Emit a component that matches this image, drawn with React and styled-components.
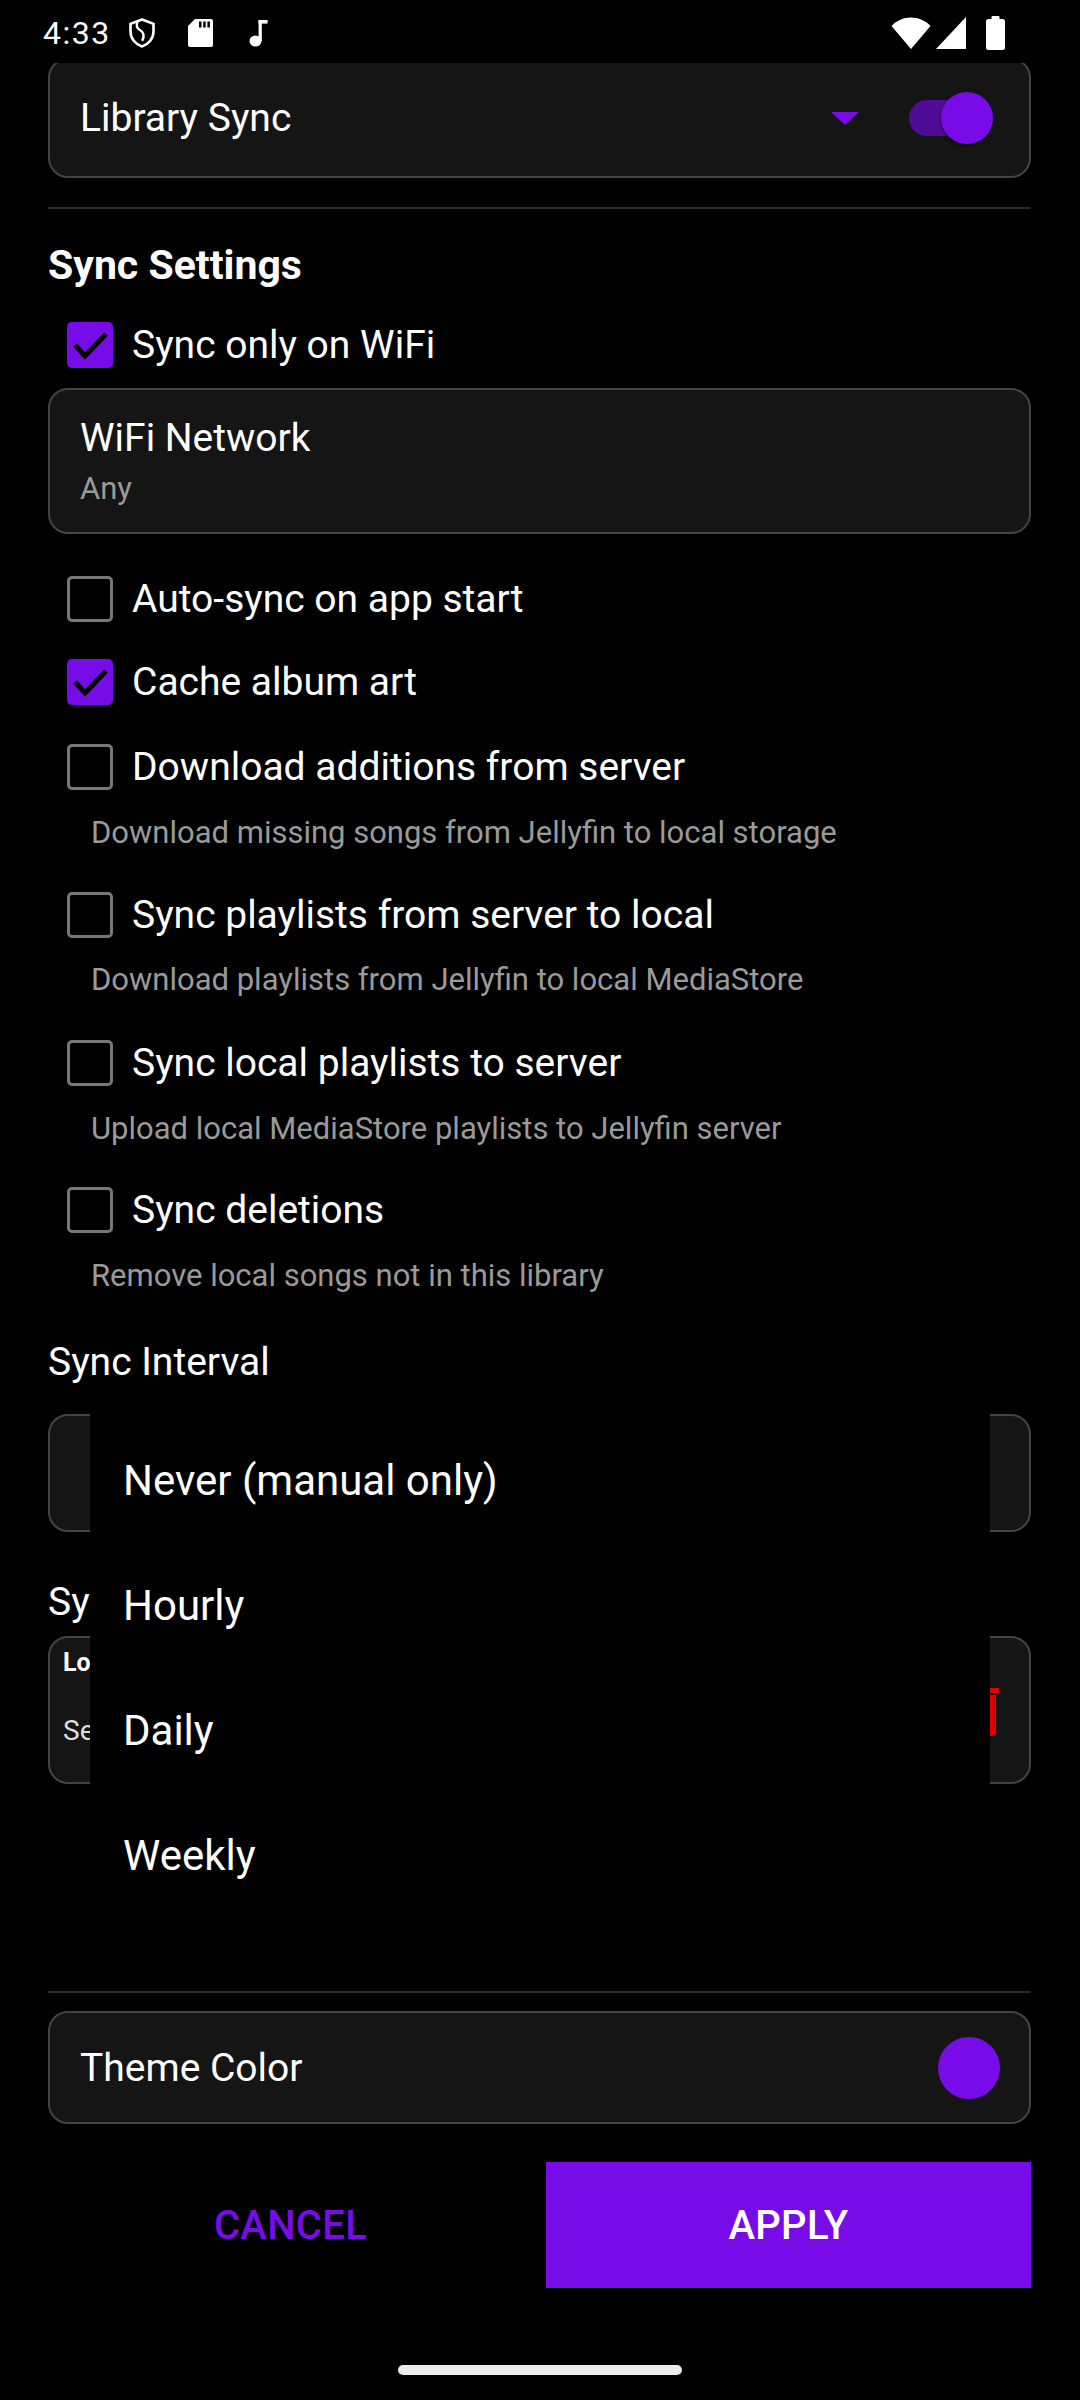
import styled, { createGlobalStyle } from "styled-components";

const PURPLE = "#780ce8";

const GlobalStyle = createGlobalStyle`
  html, body {
    margin: 0;
    padding: 0;
    background: #000;
  }
  * {
    box-sizing: border-box;
  }
`;

const Screen = styled.div`
  width: 1080px;
  height: 2400px;
  background: #000;
  display: flex;
  flex-direction: column;
  overflow: hidden;
  font-family: Roboto, "Noto Sans", sans-serif;
  color: #fff;
`;

const StatusBar = styled.div`
  height: 63px;
  flex-shrink: 0;
  display: flex;
  align-items: center;
  justify-content: space-between;
  padding: 2px 75px 0 43px;
  background: #000;
  position: relative;
  z-index: 5;
`;

const StatusGroup = styled.div`
  display: flex;
  align-items: center;
`;

const StatusIcon = styled.span`
  display: flex;
  margin-left: ${(p) => p.ml || 0}px;
  margin-top: ${(p) => p.mt || 0}px;
`;

const Clock = styled.span`
  font-size: 32px;
  letter-spacing: 1.5px;
  line-height: 1;
`;

const Scroll = styled.div`
  flex: 1;
  overflow: hidden;
  padding: 0 49px 0 48px;
`;

const Card = styled.div`
  background: #151515;
  border: 2px solid #444;
  border-radius: 20px;
  display: flex;
  align-items: ${(p) => (p.top ? "flex-start" : "center")};
  padding: ${(p) => (p.top ? "8px 30px 0 13px" : "0 30px")};
  height: ${(p) => p.h}px;
  margin-top: ${(p) => p.mt || 0}px;
`;

const CardText = styled.div`
  flex: 1;
  display: flex;
  flex-direction: column;
  gap: ${(p) => p.gap || 0}px;
`;

const Label = styled.span`
  font-size: 39px;
  line-height: 48px;
  color: #fff;
`;

const SubLabel = styled.span`
  font-size: 31px;
  line-height: 40px;
  color: #9a9a9a;
`;

const SmallBold = styled.span`
  font-size: 25px;
  font-weight: 700;
  line-height: 34px;
`;

const SmallText = styled.span`
  font-size: 28px;
  line-height: 36px;
  color: #ddd;
`;

const Divider = styled.div`
  height: 2px;
  background: #2a2a2a;
  margin-top: ${(p) => p.mt}px;
`;

const SectionTitle = styled.div`
  font-size: 41px;
  font-weight: 700;
  line-height: 48px;
  margin-top: ${(p) => p.mt}px;
`;

const FieldTitle = styled.div`
  font-size: 39px;
  line-height: 48px;
  margin-top: ${(p) => p.mt}px;
`;

const CheckRow = styled.div`
  height: 72px;
  display: flex;
  align-items: center;
  gap: 19px;
  padding-left: 19px;
  margin-top: ${(p) => p.mt || 0}px;
`;

const Box = styled.div`
  width: 46px;
  height: 46px;
  border-radius: 5px;
  flex-shrink: 0;
  display: flex;
  align-items: center;
  justify-content: center;
  background: ${(p) => (p.checked ? PURPLE : "transparent")};
  border: ${(p) => (p.checked ? "none" : "3px solid #777")};
`;

const Description = styled.div`
  font-size: 31px;
  line-height: 40px;
  color: #9a9a9a;
  padding-left: 43px;
  margin-top: ${(p) => p.mt}px;
`;

const Arrow = styled.div`
  width: 0;
  height: 0;
  border-left: 14px solid transparent;
  border-right: 14px solid transparent;
  border-top: 13px solid ${PURPLE};
  margin-right: ${(p) => p.mr || 0}px;
`;

const SwitchTrack = styled.div`
  position: relative;
  width: 78px;
  height: 36px;
  border-radius: 18px;
  background: #4e0b96;
  margin-right: 12px;
`;

const SwitchThumb = styled.div`
  position: absolute;
  right: -6px;
  top: -8px;
  width: 52px;
  height: 52px;
  border-radius: 50%;
  background: ${PURPLE};
  box-shadow: 0 2px 3px rgba(0, 0, 0, 0.6);
`;

const Swatch = styled.div`
  width: 62px;
  height: 62px;
  border-radius: 50%;
  background: ${PURPLE};
  margin-right: -1px;
`;

const DropdownAnchor = styled.div`
  position: relative;
  margin-top: ${(p) => p.mt}px;
`;

const Menu = styled.div`
  position: absolute;
  top: 0;
  left: 42px;
  right: 41px;
  background: #000;
  padding: 4px 0;
  z-index: 10;
`;

const MenuItem = styled.div`
  height: 125px;
  display: flex;
  align-items: center;
  padding-left: 33px;
  font-size: 42px;
  color: #fff;
`;

const Buttons = styled.div`
  display: flex;
  gap: 13px;
  margin-top: 38px;
`;

const Button = styled.div`
  flex: 1;
  height: 126px;
  display: flex;
  align-items: center;
  justify-content: center;
  font-size: 40px;
  font-weight: 500;
  letter-spacing: 0.3px;
  color: ${(p) => (p.primary ? "#fff" : PURPLE)};
  background: ${(p) => (p.primary ? PURPLE : "transparent")};
`;

const NavBar = styled.div`
  height: 61px;
  flex-shrink: 0;
  display: flex;
  align-items: center;
  justify-content: center;
`;

const Handle = styled.div`
  width: 284px;
  height: 10px;
  border-radius: 5px;
  background: #ececec;
`;

const Check = ({ checked }) => (
  <Box checked={checked}>
    {checked && (
      <svg width="46" height="46" viewBox="0 0 46 46">
        <polyline
          points="8,23 18,34 39,12"
          fill="none"
          stroke="#000"
          strokeWidth="5"
        />
      </svg>
    )}
  </Box>
);

const Option = ({ checked, label, desc, mt, descMt = 10 }) => (
  <>
    <CheckRow mt={mt}>
      <Check checked={checked} />
      <Label>{label}</Label>
    </CheckRow>
    {desc && <Description mt={descMt}>{desc}</Description>}
  </>
);

const ShieldIcon = () => (
  <svg width="28" height="30" viewBox="0 0 28 30">
    <path
      d="M14 1.5 2.5 5.8v7.7c0 7 4.8 12.8 11.5 15 6.7-2.2 11.5-8 11.5-15V5.8z"
      fill="none"
      stroke="#fff"
      strokeWidth="2.6"
    />
    <path
      d="M9.5 4c-1.6 3.4-.8 6.2 2.7 8.3 3.6 2.1 4.6 5.6 1.9 10.6"
      fill="none"
      stroke="#fff"
      strokeWidth="2.4"
    />
  </svg>
);

const SdIcon = () => (
  <svg width="25" height="28" viewBox="0 0 25 28">
    <path d="M7 0h16a2 2 0 0 1 2 2v24a2 2 0 0 1-2 2H2a2 2 0 0 1-2-2V7z" fill="#fff" />
    <rect x="11" y="2.5" width="2.5" height="6" fill="#000" />
    <rect x="15.2" y="2.5" width="2.5" height="6" fill="#000" />
    <rect x="19.4" y="2.5" width="2.5" height="6" fill="#000" />
  </svg>
);

const NoteIcon = () => (
  <svg width="19" height="28" viewBox="0 0 19 28">
    <ellipse cx="6.5" cy="22" rx="6" ry="5.6" fill="#fff" />
    <rect x="9.6" y="1" width="3.2" height="21" fill="#fff" />
    <rect x="9.6" y="1" width="9" height="3.6" fill="#fff" />
  </svg>
);

const WifiIcon = () => (
  <svg width="40" height="32" viewBox="0 0 40 32">
    <path d="M20 32 0.5 9C5.7 3.5 12.5 0.5 20 0.5S34.3 3.5 39.5 9z" fill="#fff" />
  </svg>
);

const SignalIcon = () => (
  <svg width="30" height="32" viewBox="0 0 30 32">
    <path d="M0 32h30V0z" fill="#fff" />
  </svg>
);

const BatteryIcon = () => (
  <svg width="19" height="34" viewBox="0 0 19 34">
    <rect x="5.5" y="0" width="8" height="4" rx="1" fill="#fff" />
    <rect x="0" y="3" width="19" height="31" rx="2.5" fill="#fff" />
  </svg>
);

const TrashIcon = () => (
  <svg width="40" height="48" viewBox="0 0 40 48">
    <rect x="0" y="0" width="40" height="5" fill="#e00000" />
    <rect x="14" y="-3" width="12" height="4" fill="#e00000" />
    <path d="M3 7h34v37a4 4 0 0 1-4 4H7a4 4 0 0 1-4-4z" fill="#e00000" />
  </svg>
);

const App = () => (
  <Screen>
    <GlobalStyle />
    <StatusBar>
      <StatusGroup>
        <Clock>4:33</Clock>
        <StatusIcon ml={17}>
          <ShieldIcon />
        </StatusIcon>
        <StatusIcon ml={32}>
          <SdIcon />
        </StatusIcon>
        <StatusIcon ml={36}>
          <NoteIcon />
        </StatusIcon>
      </StatusGroup>
      <StatusGroup>
        <WifiIcon />
        <StatusIcon ml={5}>
          <SignalIcon />
        </StatusIcon>
        <StatusIcon ml={20}>
          <BatteryIcon />
        </StatusIcon>
      </StatusGroup>
    </StatusBar>

    <Scroll>
      <Card h={120} mt={-5}>
        <CardText>
          <Label>Library Sync</Label>
        </CardText>
        <Arrow mr={50} />
        <SwitchTrack>
          <SwitchThumb />
        </SwitchTrack>
      </Card>

      <Divider mt={29} />
      <SectionTitle mt={32}>Sync Settings</SectionTitle>

      <Option checked label="Sync only on WiFi" mt={20} />
      <Card h={146} mt={7}>
        <CardText gap={7}>
          <Label>WiFi Network</Label>
          <SubLabel>Any</SubLabel>
        </CardText>
      </Card>

      <Option label="Auto-sync on app start" mt={29} />
      <Option checked label="Cache album art" mt={11} />
      <Option
        label="Download additions from server"
        desc="Download missing songs from Jellyfin to local storage"
        mt={13}
      />
      <Option
        label="Sync playlists from server to local"
        desc="Download playlists from Jellyfin to local MediaStore"
        mt={26}
        descMt={9}
      />
      <Option
        label="Sync local playlists to server"
        desc="Upload local MediaStore playlists to Jellyfin server"
        mt={27}
        descMt={10}
      />
      <Option
        label="Sync deletions"
        desc="Remove local songs not in this library"
        mt={25}
      />

      <FieldTitle mt={42}>Sync Interval</FieldTitle>
      <DropdownAnchor mt={28}>
        <Card h={118}>
          <CardText />
          <Arrow mr={20} />
        </Card>
        <Menu>
          <MenuItem>Never (manual only)</MenuItem>
          <MenuItem>Hourly</MenuItem>
          <MenuItem>Daily</MenuItem>
          <MenuItem>Weekly</MenuItem>
        </Menu>
      </DropdownAnchor>

      <FieldTitle mt={46}>Sync Source</FieldTitle>
      <Card h={148} mt={10} top>
        <CardText gap={33}>
          <SmallBold>Local Library</SmallBold>
          <SmallText>Select a folder to sync</SmallText>
        </CardText>
        <StatusIcon mt={42}>
          <TrashIcon />
        </StatusIcon>
      </Card>

      <Divider mt={207} />
      <Card h={113} mt={18}>
        <CardText>
          <Label>Theme Color</Label>
        </CardText>
        <Swatch />
      </Card>

      <Buttons>
        <Button>CANCEL</Button>
        <Button primary>APPLY</Button>
      </Buttons>
    </Scroll>

    <NavBar>
      <Handle />
    </NavBar>
  </Screen>
);

export default App;
